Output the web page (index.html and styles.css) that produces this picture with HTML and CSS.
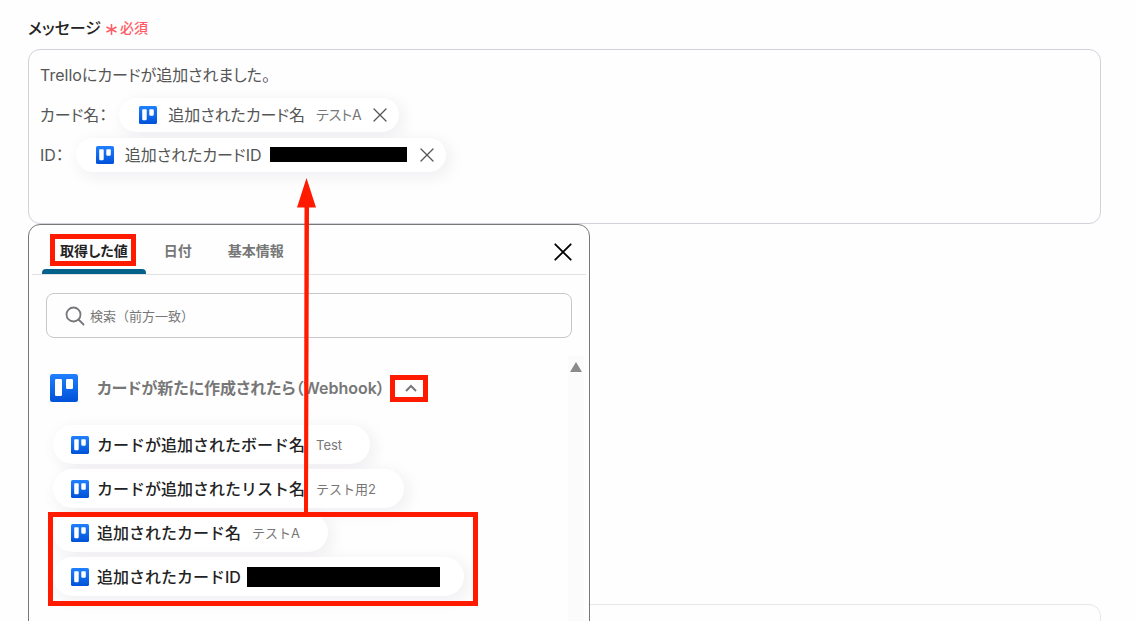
FILE: index.html
```
<!DOCTYPE html>
<html lang="ja">

<head>
    <meta charset="UTF-8">
    <meta name="viewport" content="width=device-width, initial-scale=1.0">
    <title>メッセージ</title>
    <link rel="stylesheet" href="styles.css">
</head>

<body>

    <svg class="defs" aria-hidden="true">
        <linearGradient id="blue" x1="0" y1="0" x2="0" y2="1">
            <stop offset="0" stop-color="#2080ff" />
            <stop offset="1" stop-color="#0052d8" />
        </linearGradient>
        <symbol id="trello" viewBox="0 0 28 28">
            <rect width="28" height="28" rx="2.5" fill="url(#blue)" />
            <rect x="5" y="5" width="7" height="17" rx="1.2" fill="#fff" />
            <rect x="16" y="5" width="7" height="10" rx="1.2" fill="#fff" />
        </symbol>
        <symbol id="close" viewBox="0 0 14 14">
            <path d="M1 1L13 13M13 1L1 13" fill="none" stroke="currentColor" stroke-linecap="round" />
        </symbol>
    </svg>

    <main class="form">
        <div class="field-label">
            <span id="message-label">メッセージ</span>
            <span class="required"><svg width="11" height="14" viewBox="0 0 11 14"><path d="M5.500 3V14M0.500 6L10.500 11M10.500 6L0.500 11" stroke="currentColor" stroke-width="1.500" /></svg>必須</span>
        </div>

        <div class="field">
            <div class="editor" contenteditable="true" role="textbox" aria-labelledby="message-label" spellcheck="false">
                <div class="row">Trelloにカードが追加されました。</div>
                <div class="row">
                    <span class="name">カード名：</span>
                    <span class="token" contenteditable="false">
                        <svg class="logo"><use href="#trello" /></svg>
                        <span>追加されたカード名</span>
                        <small>テストA</small>
                        <button type="button" aria-label="削除"><svg><use href="#close" /></svg></button>
                    </span>
                </div>
                <div class="row">
                    <span class="name">ID：</span>
                    <span class="token masked" contenteditable="false">
                        <svg class="logo"><use href="#trello" /></svg>
                        <span>追加されたカードID</span>
                        <i class="mask"></i>
                        <button type="button" aria-label="削除"><svg><use href="#close" /></svg></button>
                    </span>
                </div>
            </div>

            <section class="picker">
                <header class="tabs">
                    <button type="button" class="tab active">取得した値</button>
                    <button type="button" class="tab">日付</button>
                    <button type="button" class="tab">基本情報</button>
                    <button type="button" class="close" aria-label="閉じる"><svg><use href="#close" /></svg></button>
                </header>

                <label class="search">
                    <svg viewBox="0 0 20 20"><circle cx="8.500" cy="8.500" r="7" /><path d="M13.500 13.500L18.500 18.500" /></svg>
                    <input type="text" placeholder="検索（前方一致）" aria-label="検索">
                </label>

                <div class="list">
                    <div class="group">
                        <svg class="logo"><use href="#trello" /></svg>
                        <h2>カードが新たに作成されたら（Webhook）</h2>
                        <button type="button" aria-label="折りたたむ"><svg viewBox="0 0 12 8"><path d="M1 7L6 2L11 7" /></svg></button>
                    </div>
                    <div class="values">
                        <button type="button" class="value"><svg class="logo"><use href="#trello" /></svg><b>カードが追加されたボード名</b><small>Test</small></button>
                        <button type="button" class="value"><svg class="logo"><use href="#trello" /></svg><b>カードが追加されたリスト名</b><small>テスト用2</small></button>
                        <button type="button" class="value"><svg class="logo"><use href="#trello" /></svg><b>追加されたカード名</b><small>テストA</small></button>
                        <button type="button" class="value masked"><svg class="logo"><use href="#trello" /></svg><b>追加されたカードID</b><i class="mask"></i></button>
                    </div>
                    <div class="scrollbar"></div>
                </div>
            </section>
        </div>

        <div class="next-card"></div>
    </main>

    <!-- 操作手順の赤枠と矢印 -->
    <div class="mark mark-tab"></div>
    <div class="mark mark-toggle"></div>
    <div class="mark mark-values"></div>
    <svg class="arrow" viewBox="0 0 20 335"><path d="M10.500 0L20 29.500H13L12 335H8L8.500 29.500H1Z" fill="#ff1a00" /></svg>

</body>

</html>
```
FILE: styles.css
```
* {
    box-sizing: border-box;
    margin: 0;
    padding: 0;
}

body {
    height: 100vh;
    overflow: hidden;
    position: relative;
    background: #fefefe;
    color: #555;
    font-family: Inter, "Noto Sans CJK JP", sans-serif;
    font-size: 16px;
    line-height: 24px;
    font-feature-settings: "palt";
}

button {
    border: none;
    background: none;
    color: inherit;
    font: inherit;
    font-feature-settings: inherit;
    cursor: pointer;
}

svg {
    display: block;
    flex: none;
}

i {
    display: block;
}

.defs {
    position: absolute;
    width: 0;
    height: 0;
}

.form {
    height: 100%;
    overflow: hidden;
    padding: 16px 34px 0 28px;
}

.field-label {
    display: flex;
    gap: 5px;
    height: 33px;
    color: #222;
    font-weight: 500;
}

.required {
    display: flex;
    align-items: center;
    gap: 3px;
    height: 24px;
    color: #ff5c66;
    font-size: 14px;
}

.field {
    position: relative;
}

.editor {
    display: flex;
    flex-direction: column;
    gap: 6px;
    min-height: 175px;
    padding: 8px 11px;
    border: 1px solid #d0d2da;
    border-radius: 12px;
    outline: none;
}

.row {
    display: flex;
    align-items: center;
    gap: 12px;
    height: 34px;
}

.token,
.value {
    display: flex;
    align-items: center;
    border-radius: 20px;
    background: #fff;
    box-shadow: 4px 4px 16px rgba(60, 40, 80, 0.08);
}

.token {
    gap: 11px;
    height: 34px;
    padding: 0 12px 0 20px;
}

.token .logo,
.value .logo {
    width: 18px;
    height: 18px;
}

.token small {
    color: #777;
    font-size: 14px;
}

.token button svg {
    width: 14px;
    height: 14px;
    stroke-width: 1.3;
}

.mask {
    background: #000;
}

.token .mask {
    width: 137px;
    height: 15px;
    margin: 0 2px 2px -3px;
}

.picker {
    position: absolute;
    top: 100%;
    left: 0;
    z-index: 1;
    width: 562px;
    height: 440px;
    border: 1px solid #77777c;
    border-radius: 12px;
    background: #fefefe;
}

.tabs {
    display: flex;
    height: 50px;
    margin: 0 3px;
    padding: 0 10px;
    border-bottom: 1px solid #e2e2e6;
}

.tab {
    position: relative;
    padding: 3px 18px 0;
    color: #777;
    font-size: 14px;
    font-weight: 600;
}

.tab.active {
    color: #222;
}

.tab.active::after {
    content: "";
    position: absolute;
    right: 0;
    bottom: 0;
    left: 0;
    height: 5px;
    border-radius: 4px 4px 0 0;
    background: #04628a;
}

.close {
    margin: 4px 4px 0 auto;
    color: #000;
}

.close svg {
    width: 18px;
    height: 18px;
    stroke-width: 1.4;
}

.search {
    display: flex;
    align-items: center;
    gap: 5px;
    height: 45px;
    margin: 18px 17px 0;
    padding: 0 18px;
    border: 1px solid #c8c8cc;
    border-radius: 8px;
}

.search svg {
    width: 20px;
    height: 20px;
    fill: none;
    stroke: #77777c;
    stroke-width: 1.8;
    stroke-linecap: round;
}

.search input {
    flex: 1;
    border: none;
    outline: none;
    background: none;
    font: inherit;
    font-size: 13px;
    font-feature-settings: normal;
}

.search input::placeholder {
    color: #777;
}

.list {
    position: relative;
    padding: 36px 21px 0;
}

.group {
    display: flex;
    align-items: center;
    height: 28px;
}

.group .logo {
    width: 28px;
    height: 28px;
}

.group h2 {
    margin: 0 20px 0 19px;
    color: #777;
    font-size: 16px;
    font-weight: 600;
}

.group button svg {
    width: 12px;
    height: 8px;
    fill: none;
    stroke: #77777c;
    stroke-width: 2;
}

.values {
    display: flex;
    flex-direction: column;
    align-items: flex-start;
    gap: 5px;
    padding: 23px 3px;
    font-feature-settings: normal;
}

.value {
    gap: 8px;
    height: 39px;
    padding: 0 28px 0 18px;
}

.value b {
    color: #222;
    font-weight: 500;
}

.value small {
    margin-left: 3px;
    color: #777;
    font-size: 13px;
}

.value .mask {
    width: 193px;
    height: 20px;
    margin-left: -2px;
}

.value.masked {
    padding-right: 24px;
}

.scrollbar {
    position: absolute;
    top: 18px;
    right: 5px;
    width: 16px;
    height: 280px;
    background: #fcfbfc;
}

.scrollbar::before {
    content: "";
    position: absolute;
    top: 6px;
    left: 2px;
    border: 6px solid transparent;
    border-top: none;
    border-bottom: 10px solid #8b8b8b;
}

.next-card {
    height: 60px;
    margin-top: 380px;
    border: 1px solid #e8e6ea;
    border-radius: 12px;
}

.mark {
    position: absolute;
    z-index: 2;
    border: 5px solid #ff1a00;
    pointer-events: none;
}

.mark-tab {
    top: 234px;
    left: 50px;
    width: 86px;
    height: 32px;
}

.mark-toggle {
    top: 375px;
    left: 390px;
    width: 38px;
    height: 27px;
}

.mark-values {
    top: 512px;
    left: 48px;
    width: 430px;
    height: 94px;
}

.arrow {
    position: absolute;
    top: 178px;
    left: 296px;
    z-index: 2;
    width: 20px;
    height: 335px;
    pointer-events: none;
}
```
